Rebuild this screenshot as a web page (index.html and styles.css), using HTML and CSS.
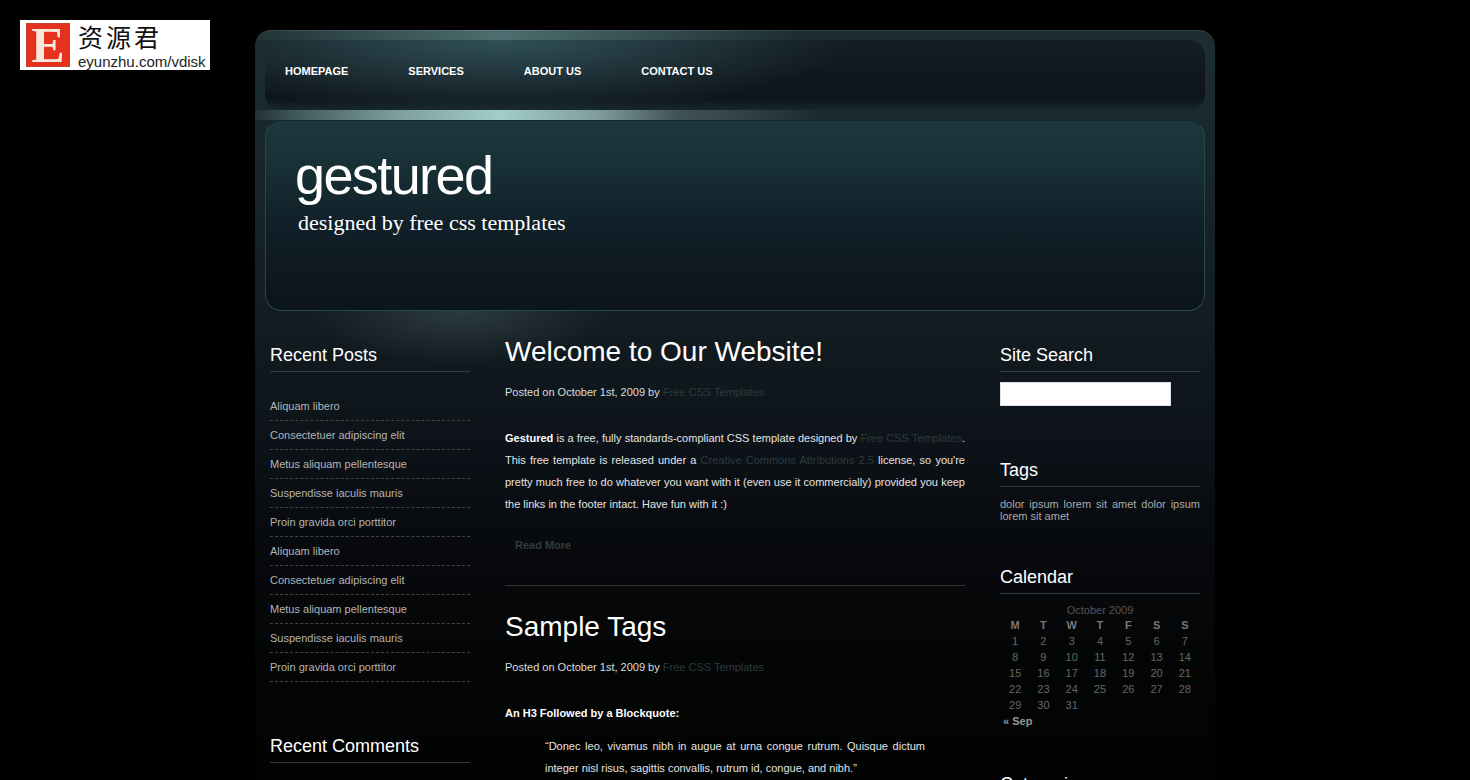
FILE: index.html
```html
<!DOCTYPE html>
<html lang="en">
<head>
<meta charset="utf-8">
<title>gestured</title>
<link rel="stylesheet" href="styles.css">
</head>
<body>
<a class="logo" href="#">
  <span class="logo-mark">E</span>
  <span class="logo-text">
    <span class="logo-cn">资源君</span>
    <span class="logo-url">eyunzhu.com/vdisk</span>
  </span>
</a>
<div class="wrap">
  <nav class="menu">
    <a href="#">HOMEPAGE</a>
    <a href="#">SERVICES</a>
    <a href="#">ABOUT US</a>
    <a href="#">CONTACT US</a>
  </nav>
  <header class="header">
    <h1>gestured</h1>
    <p>designed by free css templates</p>
  </header>
  <div class="page">
    <aside class="side">
      <section class="widget">
        <h2>Recent Posts</h2>
        <ul class="list">
          <li>Aliquam libero</li>
          <li>Consectetuer adipiscing elit</li>
          <li>Metus aliquam pellentesque</li>
          <li>Suspendisse iaculis mauris</li>
          <li>Proin gravida orci porttitor</li>
          <li>Aliquam libero</li>
          <li>Consectetuer adipiscing elit</li>
          <li>Metus aliquam pellentesque</li>
          <li>Suspendisse iaculis mauris</li>
          <li>Proin gravida orci porttitor</li>
        </ul>
      </section>
      <section class="widget comments">
        <h2>Recent Comments</h2>
      </section>
    </aside>
    <main class="main">
      <article class="post">
        <h2 class="title">Welcome to Our Website!</h2>
        <p class="meta">Posted on October 1st, 2009 by <a href="#">Free CSS Templates</a></p>
        <p class="body"><strong>Gestured</strong> is a free, fully standards-compliant CSS template designed by <a href="#">Free CSS Templates</a>. This free template is released under a <a href="#">Creative Commons Attributions 2.5</a> license, so you're pretty much free to do whatever you want with it (even use it commercially) provided you keep the links in the footer intact. Have fun with it :)</p>
        <a class="more" href="#">Read More</a>
      </article>
      <article class="post second">
        <h2 class="title">Sample Tags</h2>
        <p class="meta">Posted on October 1st, 2009 by <a href="#">Free CSS Templates</a></p>
        <h3>An H3 Followed by a Blockquote:</h3>
        <blockquote>“Donec leo, vivamus nibh in augue at urna congue rutrum. Quisque dictum integer nisl risus, sagittis convallis, rutrum id, congue, and nibh.”</blockquote>
      </article>
    </main>
    <aside class="side">
      <section class="widget">
        <h2>Site Search</h2>
        <input class="search" type="text" aria-label="Search">
      </section>
      <section class="widget tags">
        <h2>Tags</h2>
        <p>dolor ipsum lorem sit amet dolor ipsum lorem sit amet</p>
      </section>
      <section class="widget calendar">
        <h2>Calendar</h2>
        <table>
          <caption>October 2009</caption>
          <thead><tr><th>M</th><th>T</th><th>W</th><th>T</th><th>F</th><th>S</th><th>S</th></tr></thead>
          <tbody>
            <tr><td>1</td><td>2</td><td>3</td><td>4</td><td>5</td><td>6</td><td>7</td></tr>
            <tr><td>8</td><td>9</td><td>10</td><td>11</td><td>12</td><td>13</td><td>14</td></tr>
            <tr><td>15</td><td>16</td><td>17</td><td>18</td><td>19</td><td>20</td><td>21</td></tr>
            <tr><td>22</td><td>23</td><td>24</td><td>25</td><td>26</td><td>27</td><td>28</td></tr>
            <tr><td>29</td><td>30</td><td>31</td><td></td><td></td><td></td><td></td></tr>
          </tbody>
          <tfoot><tr><td colspan="3" class="prev">« Sep</td><td colspan="4"></td></tr></tfoot>
        </table>
      </section>
      <section class="widget categories">
        <h2>Categories</h2>
      </section>
    </aside>
  </div>
</div>
</body>
</html>
```
FILE: styles.css
```css
* { box-sizing: border-box; }
html, body { margin: 0; height: 780px; overflow: hidden; background: #000; }
body { font-family: "Liberation Sans", Arial, sans-serif; font-size: 11px; color: #fff; position: relative; }
a { color: inherit; text-decoration: none; }
h1, h2, h3, p, ul, blockquote { margin: 0; padding: 0; font-weight: normal; }

.logo { position: absolute; left: 20px; top: 20px; width: 190px; height: 50px; background: #fff; display: flex; color: #111; }
.logo-mark { margin: 3px 0 0 6px; width: 44px; height: 44px; background: #e4321f; border: 1px solid #c8402f; color: #f8e8da; font-family: "Liberation Serif", serif; font-weight: bold; font-size: 50px; line-height: 42px; text-align: center; }
.logo-text { margin-left: 8px; display: flex; flex-direction: column; }
.logo-cn { font-family: "Noto Sans CJK SC", sans-serif; font-size: 25px; line-height: 33px; letter-spacing: 3px; height: 33px; }
.logo-url { font-size: 15px; line-height: 17px; white-space: nowrap; color: #222; }

.wrap {
  margin: 30px 0 0 255px; width: 960px; height: 900px; padding: 10px 10px 0;
  border-radius: 16px 16px 0 0;
  background:
    radial-gradient(ellipse 150px 55px at 205px 280px, #2c3a40 0%, rgba(44,58,64,0) 100%),
    linear-gradient(180deg, #1d2e32 0, #131d22 280px, #0c1218 420px, #07090d 520px, #040606 620px, #020303 740px);
  box-shadow: inset 0 1px 0 rgba(255,255,255,.1);
  position: relative;
}
.wrap::before {
  content: ""; position: absolute; left: 0; right: 0; top: 0; height: 10px; border-radius: 16px 16px 0 0; pointer-events: none;
  background: linear-gradient(90deg, rgba(150,205,205,.03) 0, rgba(150,205,205,.4) 245px, rgba(150,205,205,0) 540px);
}
.menu {
  position: relative; height: 70px; display: flex; align-items: center; gap: 60px; padding: 0 20px 8px; border-radius: 16px;
  background:
    radial-gradient(ellipse 350px 75px at 235px 0, rgba(54,92,98,.8) 0%, rgba(54,92,98,0) 100%),
    linear-gradient(180deg, #141e24 0, #0f161c 60%, #0e161b 85%, #17272a 100%);
}
.menu a { font-size: 11px; font-weight: bold; color: #fff; }

.header {
  position: relative; margin-top: 10px; height: 191px; padding: 25px 29px 0; border: 1px solid #27474a; border-top-color: #12282c; border-radius: 16px;
  background: linear-gradient(180deg, #1e373c 0, #183035 25%, #11222a 50%, #0e1820 80%, #0b151b 100%);
}
.header::before {
  content: ""; position: absolute; left: -11px; right: -11px; top: -11px; height: 10px;
  background: linear-gradient(90deg, #223236 0, #3f5658 4%, #7a9a9a 14%, #a2cdcb 25.5%, #7f9a9a 36%, #3f5256 44%, #3a4850 48%, #1a2a2e 59%, #1a2a2e 100%);
}
.header h1 { font-size: 54px; line-height: 58px; letter-spacing: -1.6px; color: #fff; }
.header p { margin: 6px 0 0 3px; font-family: "Liberation Serif", serif; font-size: 22px; line-height: 26px; color: #fff; }

.page { display: flex; padding: 0 5px; }
.side { width: 200px; flex: none; }
.main { width: 460px; margin: 0 35px; flex: none; }

.widget h2 { font-size: 18px; line-height: 21px; padding-bottom: 5px; border-bottom: 1px solid #2e3b3f; color: #fff; }
.side > .widget:first-child { padding-top: 34px; }
.list { list-style: none; margin-top: 20px; }
.list li { height: 29px; padding-top: 8px; line-height: 13px; color: #b4b4b4; border-bottom: 1px dashed #444; }
.comments { margin-top: 54px; }
.comments h2 { border-color: #3a3a3a; }

.search { display: block; width: 171px; height: 24px; margin-top: 10px; border: 1px solid #dde; background: #fff; padding: 0; }
.tags { margin-top: 54px; }
.tags p { margin-top: 11px; line-height: 12px; color: #aaa; text-align: justify; }
.calendar { margin-top: 45px; }
.calendar table { width: 198px; margin: 9px 1px 0; border-collapse: collapse; color: #666; font-size: 11px; table-layout: fixed; }
.calendar caption { line-height: 14px; color: #555; }
.calendar th, .calendar td { padding: 0; height: 16px; line-height: 16px; text-align: center; }
.calendar th { color: #777; }
.calendar .prev { text-align: left; padding-left: 2px; font-weight: bold; color: #999; }
.categories { margin-top: 45px; }

.post { padding-top: 21px; }
.title { font-size: 28px; line-height: 40px; color: #fff; }
.meta { margin-top: 9px; line-height: 22px; color: #ddd; }
.meta a, .body a { color: #2b3a3e; }
.body { margin-top: 24px; line-height: 22px; text-align: justify; color: #e4e4e4; }
.body strong { color: #fff; }
.more { display: block; margin-top: 19px; padding: 0 10px; line-height: 22px; font-weight: bold; color: #333b3d; }
.post:first-child { padding-bottom: 29px; border-bottom: 1px solid #333; }
.second { padding-top: 21px; }
h3 { margin-top: 24px; font-size: 11px; line-height: 22px; font-weight: bold; color: #fff; }
blockquote { margin: 11px 40px 0; line-height: 22px; text-align: justify; color: #e4e4e4; }
```
